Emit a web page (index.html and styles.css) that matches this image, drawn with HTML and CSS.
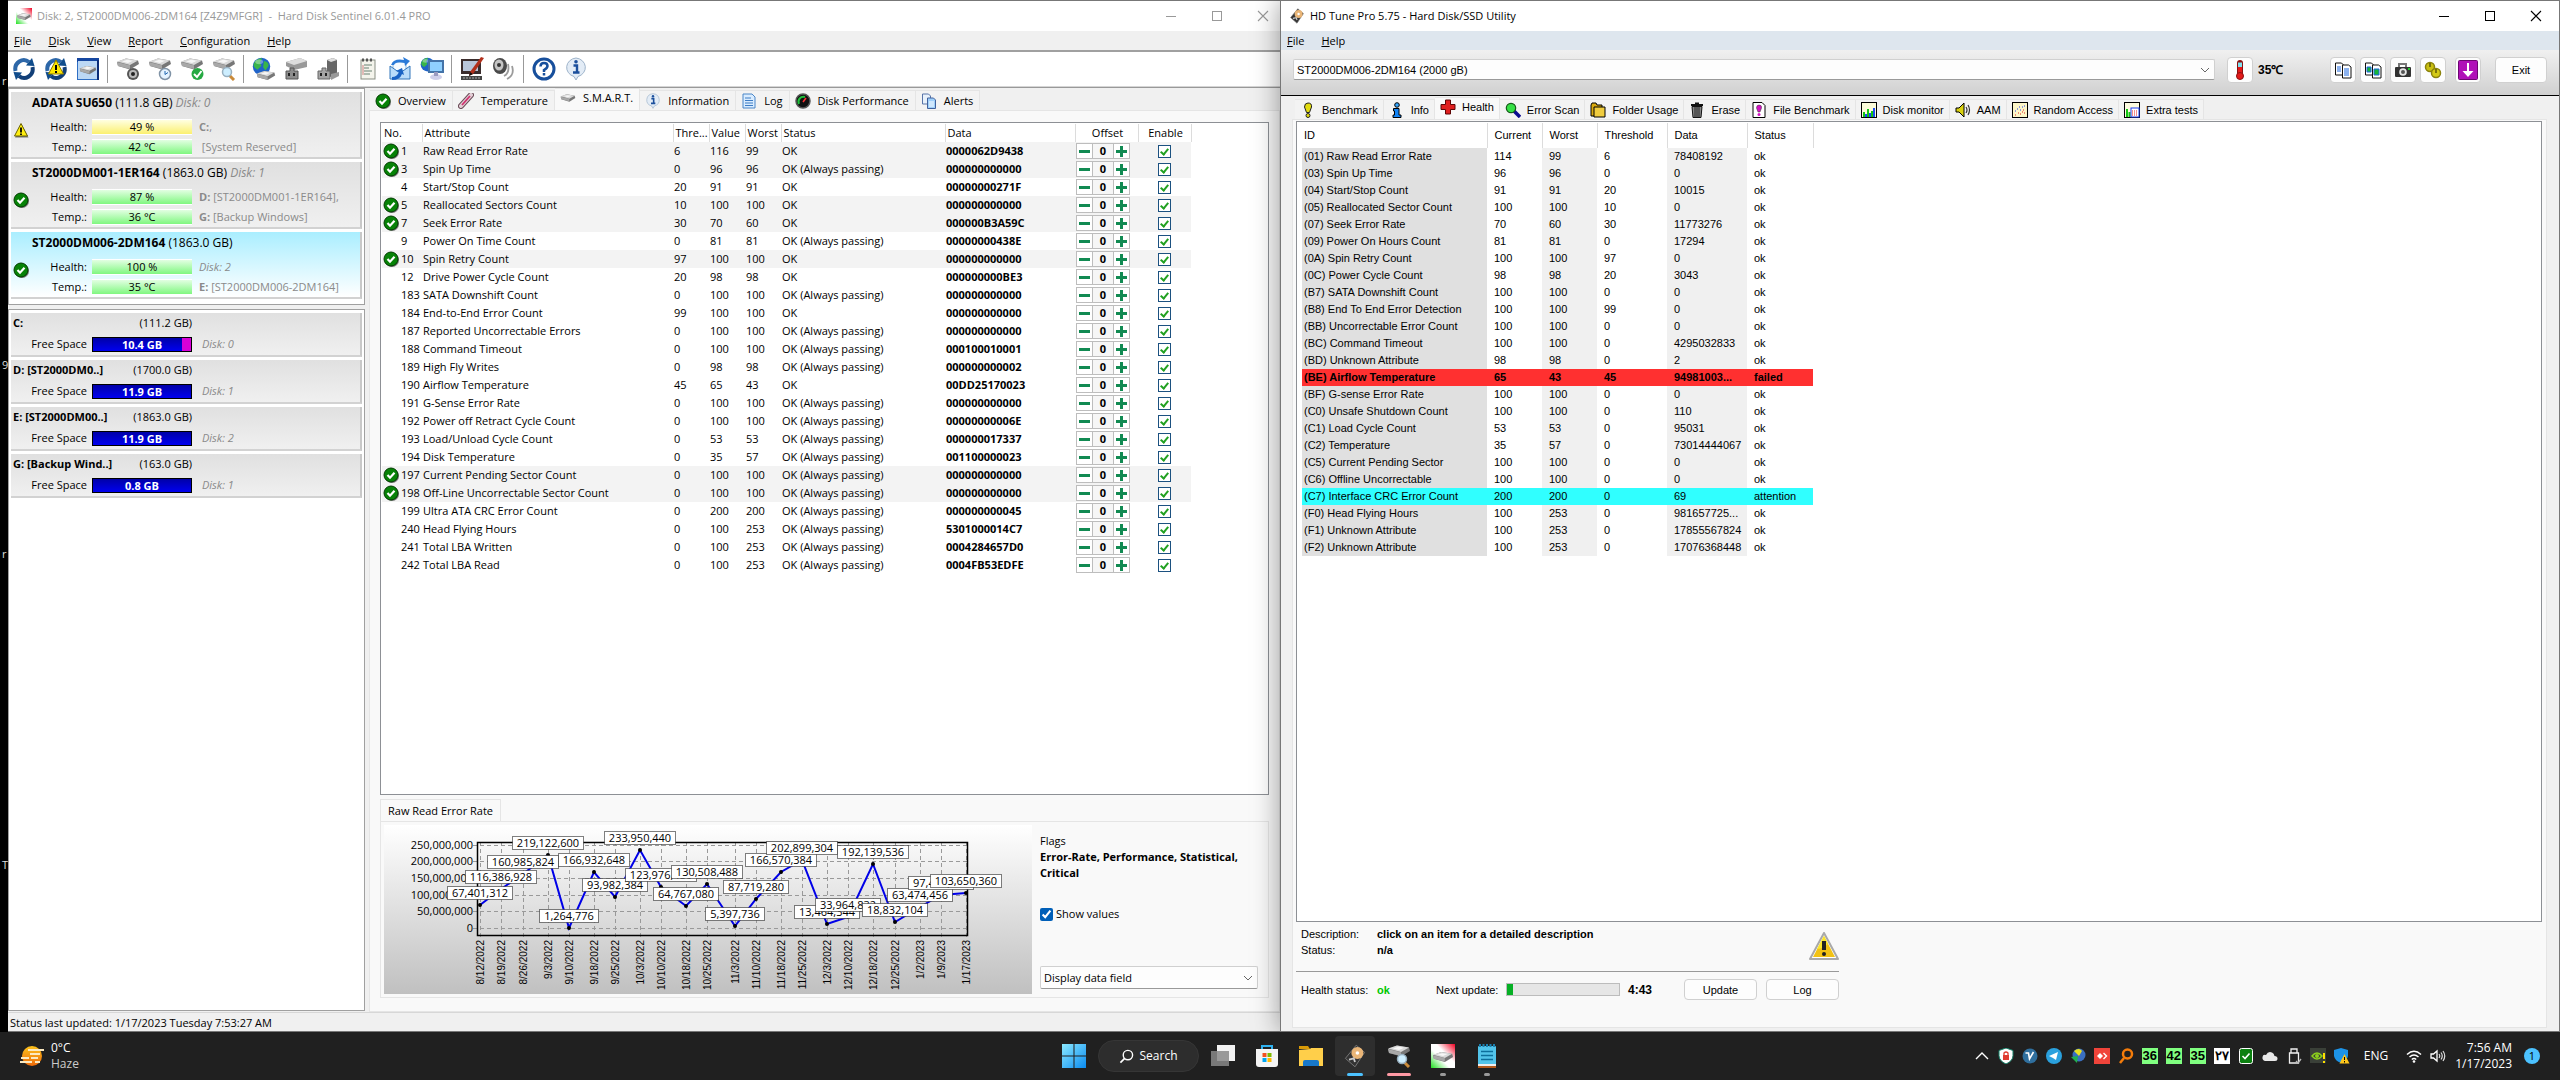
FILE: index.html
```html
<!DOCTYPE html>
<html lang="en">

<head>
    <meta charset="UTF-8">
    <meta name="viewport" content="width=device-width, initial-scale=1.0">
    <title>Desktop - Hard Disk Sentinel / HD Tune Pro</title>
    <link rel="stylesheet" href="styles.css">
</head>

<body>
    <!-- shared icon shapes -->
    <svg class="sprite" width="0" height="0" aria-hidden="true">
        <defs>
            <linearGradient id="gWin" x1="0" y1="0" x2="1" y2="1">
                <stop offset="0" stop-color="#8be9ff" />
                <stop offset="1" stop-color="#0a8bf0" />
            </linearGradient>
            <linearGradient id="gChart" x1="0" y1="0" x2="0" y2="1">
                <stop offset="0" stop-color="#fff" />
                <stop offset="1" stop-color="#c0c0c0" />
            </linearGradient>
            <linearGradient id="gRedGreen" x1="0" y1="1" x2="1" y2="0">
                <stop offset="0" stop-color="#1fe01f" />
                <stop offset="0.4" stop-color="#fff" />
                <stop offset="0.6" stop-color="#fff" />
                <stop offset="1" stop-color="#f00020" />
            </linearGradient>
            <linearGradient id="gSun" x1="0" y1="0" x2="0" y2="1">
                <stop offset="0" stop-color="#fcc21b" />
                <stop offset="1" stop-color="#ee6a0a" />
            </linearGradient>
        </defs>

        <symbol id="ok" viewBox="0 0 16 16">
            <circle cx="9" cy="9" r="7" fill="#777" />
            <circle cx="8" cy="8" r="7" fill="#078207" stroke="#013c01" />
            <path d="M4.500 8l2.500 2.700 4.500-5" fill="none" stroke="#fff" stroke-width="2.200" />
        </symbol>
        <symbol id="warn" viewBox="0 0 16 16">
            <path d="M9 3l6.500 12.500H2z" fill="#777" />
            <path d="M8 1.500l6.500 12.500H1.500z" fill="#ffee10" stroke="#6b6300" />
            <path d="M8 5.500v5M8 11.500v1.500" stroke="#000" stroke-width="1.800" />
        </symbol>
        <symbol id="drive" viewBox="0 0 24 12">
            <path d="M1 4L10 .5l12 2L23 6l-9 5.500L2 8z" fill="#777" />
            <path d="M1 3.500L10 .5l12 2-8 4.500z" fill="#d8d8d8" />
            <path d="M6 3.500l5-1.700 6 1-5 2.200z" fill="#f6f6f6" />
            <path d="M1 4l13 3.200V11L2 8z" fill="#a8a8a8" />
        </symbol>
        <symbol id="refresh" viewBox="0 0 24 24">
            <path d="M3.500 14A8.500 9 0 0 1 17 5" fill="none" stroke="#2d67a8" stroke-width="4" />
            <path d="M20.500 10A8.500 9 0 0 1 7 19" fill="none" stroke="#123f78" stroke-width="4" />
            <path d="M14 8.500l8.500.500L20 1z" fill="#0f4c8c" />
            <path d="M10 15.500L1.500 15 4 23z" fill="#0f4c8c" />
        </symbol>
        <symbol id="refresh-warn" viewBox="0 0 24 24">
            <use href="#refresh" />
            <path d="M12 3l7.500 14h-15z" fill="#ffe800" stroke="#8c7c00" />
            <path d="M12 8v5M12 14v2" stroke="#000" stroke-width="2" />
        </symbol>
        <symbol id="disk-view" viewBox="0 0 24 24">
            <rect x="1" y="1" width="22" height="22" fill="#2f6fc4" />
            <rect x="1" y="1" width="22" height="4" fill="#1647a0" />
            <rect x="2" y="4" width="19" height="18" fill="#bcd8f5" />
            <rect x="21" y="3" width="2" height="20" fill="#0b2c78" />
            <use href="#drive" x="3" y="8" width="18" height="10" />
        </symbol>
        <symbol id="d-gear" viewBox="0 0 24 24">
            <use href="#drive" x="0" y="1" width="24" height="12" />
            <circle cx="17" cy="17" r="6" fill="#555" />
            <circle cx="17" cy="17" r="4" fill="#bbb" />
            <circle cx="17" cy="17" r="2" fill="#222" />
        </symbol>
        <symbol id="d-clock" viewBox="0 0 24 24">
            <use href="#drive" x="0" y="1" width="24" height="12" />
            <circle cx="17" cy="17" r="5.500" fill="#e4f3ff" stroke="#8093a6" stroke-width="1.500" />
            <path d="M17 14v3.500l3-2" fill="none" stroke="#1f66b0" />
        </symbol>
        <symbol id="d-check" viewBox="0 0 24 24">
            <use href="#drive" x="0" y="1" width="24" height="12" />
            <circle cx="17.500" cy="17" r="6" fill="#25a942" />
            <path d="M14 17l3 3 4.500-6" fill="none" stroke="#fff" stroke-width="2" />
        </symbol>
        <symbol id="d-search" viewBox="0 0 24 24">
            <use href="#drive" x="0" y="1" width="24" height="12" />
            <path d="M17 18l5 5" stroke="#c98a3a" stroke-width="3" />
            <circle cx="15" cy="15" r="4.500" fill="#cdeeff" stroke="#98b0c0" stroke-width="1.500" />
        </symbol>
        <symbol id="globe" viewBox="0 0 24 24">
            <circle cx="12" cy="12" r="11" fill="#1f63c9" />
            <path d="M4 5q6-5 9-3l-3 5 2 4-5 5q-6-3-5-7zM15 5q6 1 6 6l-4 6-3-4z" fill="#39b54a" />
            <ellipse cx="9" cy="6" rx="5" ry="3" fill="#fff" opacity="0.350" />
        </symbol>
        <symbol id="globe-disk" viewBox="0 0 24 24">
            <use href="#globe" x="0" y="0" width="19" height="19" />
            <use href="#drive" x="4" y="13" width="20" height="11" />
        </symbol>
        <symbol id="plug-a" viewBox="0 0 24 24">
            <path d="M2 5l14-4 7 3v6l-13 3-8-4z" fill="#999" />
            <path d="M2 5l14-4 7 3-13 4z" fill="#ddd" />
            <path d="M2 14h4v-3h4v3h4v8H2z" fill="#8c8c8c" stroke="#555" />
            <path d="M5 16v3M10 16v3" stroke="#222" stroke-width="2" />
        </symbol>
        <symbol id="plug-b" viewBox="0 0 24 24">
            <path d="M11 3l6-2 4 2v14l-7 3-3-2z" fill="#666" />
            <path d="M11 3l6-2 4 2-6 2z" fill="#ddd" />
            <path d="M15 17l8-2v4l-8 4z" fill="#999" />
            <path d="M2 14h4v-3h4v3h4v8H2z" fill="#a5a5a5" stroke="#666" />
            <path d="M5 16v3M10 16v3" stroke="#222" stroke-width="2" />
        </symbol>
        <symbol id="notes" viewBox="0 0 24 24">
            <rect x="5" y="3" width="14" height="19" fill="#f4f4ec" stroke="#8a8f84" />
            <path d="M6 3h12" stroke="#555" stroke-width="3" stroke-dasharray="2 2" />
            <path d="M8 8h8M8 11h5M8 14h8M8 17h6" stroke="#97a79b" stroke-width="1.300" />
            <path d="M7 8v10" stroke="#d08080" />
        </symbol>
        <symbol id="mail" viewBox="0 0 24 24">
            <path d="M5 5h13v9H5z" fill="#f4faff" stroke="#8ab5dc" />
            <path d="M2 9l10 7 10-7v13H2z" fill="#b9dcfa" stroke="#3377bb" />
            <path d="M3 8q3-7 13-5l-1-3 7 4-5 5-.500-3Q8 4 6 8z" fill="#2a7ad8" />
            <path d="M4 20q5 0 7-5l-3-1 6-3 2 7-2-1q-2 6-10 6z" fill="#1a63c4" />
        </symbol>
        <symbol id="network" viewBox="0 0 24 24">
            <use href="#globe" x="0" y="0" width="15" height="15" />
            <rect x="9" y="4" width="14" height="11" fill="#8fd0ff" stroke="#4473a8" stroke-width="2" />
            <ellipse cx="16" cy="20" rx="6" ry="3" fill="#cfcfea" />
            <path d="M16 15v4" stroke="#9a9ac0" stroke-width="4" />
        </symbol>
        <symbol id="monitor-pen" viewBox="0 0 24 24">
            <rect x="1" y="2" width="20" height="15" fill="#3a2c2c" />
            <rect x="3" y="4" width="15" height="10" fill="#b9c6da" />
            <path d="M1 19h21v4H1z" fill="#444" />
            <path d="M3 21h17" stroke="#aaa" stroke-dasharray="2 1" />
            <path d="M24 1L21 0 10 15l-1 4 4-2z" fill="#b2301c" />
            <path d="M10 15l-1 4 4-2z" fill="#111" />
        </symbol>
        <symbol id="speaker" viewBox="0 0 24 24">
            <ellipse cx="8" cy="9" rx="7" ry="8" fill="#4a4a4a" />
            <ellipse cx="7" cy="8" rx="4.500" ry="5.500" fill="#c4c4c4" />
            <circle cx="7" cy="8" r="2" fill="#333" />
            <path d="M12 19q6-3 4-12M15 22q8-4 5-13" fill="none" stroke="#9b9b9b" stroke-width="1.800" />
        </symbol>
        <symbol id="help" viewBox="0 0 24 24">
            <circle cx="12" cy="12" r="10" fill="#fff" stroke="#174f9c" stroke-width="3" />
            <path d="M8.500 9.500q0-3.500 3.500-3.500t3.500 3q0 2-3.500 4v2M12 16v2.500" fill="none" stroke="#174f9c" stroke-width="2.500" />
        </symbol>
        <symbol id="info" viewBox="0 0 24 24">
            <path d="M12 1a10.500 9.500 0 0 1 2 18.500L12 23l-2-3.500A10.500 9.500 0 0 1 12 1z" fill="#e3ecf6" stroke="#9db3ca" />
            <path d="M9.500 8.500H13V15M9 15.500h6.500" fill="none" stroke="#1c4f9c" stroke-width="2.400" />
            <circle cx="12" cy="4.800" r="1.800" fill="#1c4f9c" />
        </symbol>
        <symbol id="thermo-pink" viewBox="0 0 16 16">
            <path d="M3 13L13 2" stroke="#6b4c58" stroke-width="6" stroke-linecap="round" />
            <path d="M3 13L13 2" stroke="#e2cfd6" stroke-width="4" stroke-linecap="round" />
            <path d="M4 12L12 3" stroke="#d0306e" stroke-width="1.800" />
        </symbol>
        <symbol id="page" viewBox="0 0 16 16">
            <path d="M2 1h9l3 3v11H2z" fill="#d9ecff" stroke="#4a86c8" />
            <path d="M4 5h6M4 7.500h8M4 10h8M4 12.500h8" stroke="#3d7cc4" />
        </symbol>
        <symbol id="gauge" viewBox="0 0 16 16">
            <circle cx="8" cy="8" r="7" fill="#111" stroke="#555" stroke-width="1.500" />
            <path d="M4 11a5 5 0 0 1 6-7" fill="none" stroke="#1fbf3a" stroke-width="2" />
            <path d="M8 9l3-4" stroke="#f33" stroke-width="1.500" />
        </symbol>
        <symbol id="pages" viewBox="0 0 16 16">
            <path d="M1.500 1h6l2 2v8h-8z" fill="#e8f1fb" stroke="#5874a8" />
            <path d="M6.500 5h6l2 2v8.500h-8z" fill="#9fd0fb" stroke="#41619c" />
            <path d="M8 9h5M8 11h5M8 13h5" stroke="#fff" />
        </symbol>
        <symbol id="app-hds" viewBox="0 0 24 24">
            <rect width="24" height="24" fill="url(#gRedGreen)" />
            <use href="#drive" x="1" y="6" width="22" height="14" />
        </symbol>

        <symbol id="app-tune" viewBox="0 0 20 20">
            <path d="M2 12L11 1l7 6-8 12z" fill="#333" stroke="#777" stroke-width="0.800" />
            <circle cx="12" cy="7.500" r="5" fill="#e9b577" />
            <circle cx="12" cy="7.500" r="1.500" fill="#fff" />
            <path d="M5 13l4-1 1 3" fill="none" stroke="#ccc" stroke-width="1.500" />
        </symbol>
        <symbol id="bang" viewBox="0 0 16 16">
            <path d="M8 1q4 0 3.500 4L9.500 10.500h-3L4.500 5Q4.500 1 8 1z" fill="#e2dc10" stroke="#222" />
            <circle cx="8" cy="13.500" r="2" fill="#e2dc10" stroke="#222" />
        </symbol>
        <symbol id="i-blue" viewBox="0 0 16 16">
            <circle cx="8" cy="3" r="2.300" fill="#35a8ff" stroke="#000" />
            <path d="M4.500 6.500h5.500v6.500h2v2.500h-8V13h1.500V9h-1z" fill="#1183f5" stroke="#000" />
        </symbol>
        <symbol id="cross" viewBox="0 0 16 16">
            <path d="M5.500 1h5v4.500H15v5h-4.500V15h-5v-4.500H1v-5h4.500z" fill="#e01f1f" stroke="#5e0505" />
        </symbol>
        <symbol id="lens" viewBox="0 0 16 16">
            <path d="M9 9l6 6" stroke="#0b0b90" stroke-width="3.500" />
            <circle cx="6" cy="6" r="4.700" fill="#35e045" stroke="#165c1a" stroke-width="1.200" />
        </symbol>
        <symbol id="folder" viewBox="0 0 16 16">
            <path d="M1 3l1-2h4l1 2h5v11H1z" fill="#d9a90d" stroke="#000" />
            <path d="M4 5h11v10H4z" fill="#f0cc3e" stroke="#000" />
        </symbol>
        <symbol id="bin" viewBox="0 0 16 16">
            <path d="M2 3h12M6 1.500h4" stroke="#111" stroke-width="2" />
            <path d="M3 4.500h10l-1 11H4z" fill="#888" stroke="#111" />
            <path d="M6 5v10M8 5v10M10 5v10" stroke="#222" />
        </symbol>
        <symbol id="file-bang" viewBox="0 0 16 16">
            <path d="M2 .500h9l3 3v12H2z" fill="#fff" stroke="#000" />
            <path d="M8 3q3 0 2.500 3L9 10H7L5.500 6Q5.500 3 8 3z" fill="#d412c4" stroke="#333" stroke-width="0.500" />
            <circle cx="8" cy="12.500" r="1.500" fill="#d412c4" />
        </symbol>
        <symbol id="bars" viewBox="0 0 16 16">
            <rect x="0.500" y="0.500" width="15" height="15" fill="#fcfcda" stroke="#000" />
            <path d="M3 15v-5M7 15V7M11 15V9" stroke="#13c513" stroke-width="2" />
            <path d="M5 15v-3M9 15v-4M13 15V6" stroke="#1b4bf0" stroke-width="2" />
        </symbol>
        <symbol id="sound" viewBox="0 0 16 16">
            <path d="M1 6h3l5-5v14l-5-5H1z" fill="#d9d10f" stroke="#000" />
            <path d="M11 5q2 3 0 6M13 3q3 5 0 10" fill="none" stroke="#333" stroke-width="1.200" />
        </symbol>
        <symbol id="scatter" viewBox="0 0 16 16">
            <rect x="0.500" y="0.500" width="15" height="15" fill="#fdf6c8" stroke="#000" />
            <path d="M3 9h1M5 7h1M8 8h1M10 5h1M12 4h1M7 5h1" stroke="#1a3cf0" />
            <path d="M3 13h1M6 11h1M8 12h1M10 10h1M12 11h1M11 8h1" stroke="#e01f1f" />
        </symbol>
        <symbol id="extra" viewBox="0 0 16 16">
            <rect x="0.500" y="0.500" width="15" height="15" fill="#fdfbe0" stroke="#000" />
            <path d="M3 15V7M5.500 15V10" stroke="#13c513" stroke-width="2" />
            <rect x="7" y="6" width="8" height="9" fill="#fff" stroke="#1a3cf0" />
            <path d="M8 9h6M8 11h6M8 13h6" stroke="#e01f1f" stroke-dasharray="1 1" />
        </symbol>
        <symbol id="thermo" viewBox="0 0 20 20">
            <path d="M10 3v10" stroke="#8a1010" stroke-width="6" stroke-linecap="round" />
            <path d="M10 2.500V8" stroke="#7fe3f0" stroke-width="4" />
            <path d="M10 7v8" stroke="#e31919" stroke-width="4" />
            <circle cx="10" cy="16" r="3.500" fill="#e31919" stroke="#8a1010" />
        </symbol>
        <symbol id="copy-text" viewBox="0 0 20 20">
            <path d="M2.500 3h6l2 2v10h-8z" fill="#fff" stroke="#111" />
            <path d="M9.500 5h6l2.500 2v11H9.500z" fill="#fff" stroke="#111" />
            <path d="M4 7h4M4 9h4M4 11h4M11 9h5M11 11h5M11 13h5M11 15h5" stroke="#1a66e0" />
        </symbol>
        <symbol id="copy-pic" viewBox="0 0 20 20">
            <path d="M2.500 3h6l2 2v10h-8z" fill="#fff" stroke="#111" />
            <path d="M9.500 5h6l2.500 2v11H9.500z" fill="#fff" stroke="#111" />
            <path d="M4 7h4v5H4zM11 9h5v6h-5z" fill="#17b538" stroke="#1a66e0" />
        </symbol>
        <symbol id="camera" viewBox="0 0 20 20">
            <path d="M6 7V4h7v3" fill="none" stroke="#777" stroke-width="2" />
            <rect x="2" y="7" width="16" height="10" rx="1" fill="#333" />
            <circle cx="10" cy="12" r="3.800" fill="#e5e5e5" />
            <circle cx="10" cy="12" r="2" fill="#555" />
            <path d="M15 9h2" stroke="#1dcc2a" stroke-width="2" />
        </symbol>
        <symbol id="wheels" viewBox="0 0 20 20">
            <circle cx="7" cy="7" r="4.500" fill="#c9bf12" stroke="#8b830c" stroke-width="1.500" />
            <circle cx="13" cy="13" r="4.500" fill="#d4ca16" stroke="#8b830c" stroke-width="1.500" />
            <path d="M7 3v4M13 9v4" stroke="#5d5806" stroke-width="1.500" />
        </symbol>
        <symbol id="save-down" viewBox="0 0 20 20">
            <rect x="0.500" y="0.500" width="19" height="19" rx="1" fill="#b010b8" stroke="#6c0671" />
            <path d="M10 3v9" stroke="#fff" stroke-width="2" />
            <path d="M4.500 11h11L10 17z" fill="#fff" />
        </symbol>
        <symbol id="big-warn" viewBox="0 0 30 28">
            <path d="M15 1l14 26H1z" fill="#fff" stroke="#a9a9a9" stroke-width="2" stroke-linejoin="round" />
            <path d="M15 4l11 21H4z" fill="#f2c214" />
            <path d="M15 4l4 8q-6 5-11 5z" fill="#fbe62a" />
            <path d="M15 9v9" stroke="#222" stroke-width="4" />
            <circle cx="15" cy="22" r="2" fill="#222" />
        </symbol>

        <symbol id="haze" viewBox="0 0 24 20">
            <circle cx="12" cy="10" r="10" fill="url(#gSun)" />
            <path d="M8 4h16M10 8h10M1 12h8M11 12h7M0 16h12M15 16h5" stroke="#fbe9c0" stroke-width="2" />
        </symbol>
        <symbol id="win" viewBox="0 0 23 23">
            <path d="M0 0h11v11H0zM12 0h11v11H12zM0 12h11v11H0zM12 12h11v11H12z" fill="url(#gWin)" />
        </symbol>
        <symbol id="search" viewBox="0 0 16 16">
            <circle cx="9.500" cy="6.500" r="5" fill="none" stroke="#fff" stroke-width="1.500" />
            <path d="M6 10L1.500 14.500" stroke="#fff" stroke-width="1.800" />
        </symbol>
        <symbol id="taskview" viewBox="0 0 24 24">
            <rect x="6" y="1" width="18" height="16" fill="#f2f2f2" />
            <rect x="0" y="7" width="18" height="15" fill="#8a8a8a" opacity="0.850" />
        </symbol>
        <symbol id="store" viewBox="0 0 24 24">
            <path d="M7 6V2h10v4" fill="none" stroke="#2fb2f0" stroke-width="2" />
            <path d="M1 5h22v15q0 3-3 3H4q-3 0-3-3z" fill="#f4f4f4" />
            <rect x="7.500" y="9" width="4" height="4" fill="#f25022" />
            <rect x="12.500" y="9" width="4" height="4" fill="#7fba00" />
            <rect x="7.500" y="14" width="4" height="4" fill="#00a4ef" />
            <rect x="12.500" y="14" width="4" height="4" fill="#ffb900" />
        </symbol>
        <symbol id="explorer" viewBox="0 0 24 24">
            <path d="M0 2h9l2 3h-11z" fill="#d99a06" />
            <path d="M0 6l11-1 1-1h12v18H0z" fill="#ffcf4a" />
            <path d="M4 22v-4q0-2 2-2h12q2 0 2 2v4z" fill="#1878c9" />
        </symbol>
        <symbol id="notepad" viewBox="0 0 18 24">
            <rect x="0" y="2" width="18" height="19" rx="1" fill="#52c4ea" />
            <path d="M1 1.500h16" stroke="#1a7fae" stroke-width="3" stroke-dasharray="2 1.500" />
            <path d="M3 7.500h12M3 11.500h12M3 15.500h12" stroke="#0c6f9c" stroke-width="1.600" />
            <rect x="0" y="20" width="18" height="2" fill="#eee" />
            <rect x="0" y="22" width="18" height="2" fill="#b35a1c" />
        </symbol>
        <symbol id="up" viewBox="0 0 16 16">
            <path d="M2 11l6-6 6 6" fill="none" stroke="#fff" stroke-width="1.400" />
        </symbol>
        <symbol id="shield-lock" viewBox="0 0 16 16">
            <path d="M8 0l7 2.500v5q0 5.500-7 8.500-7-3-7-8.500v-5z" fill="#fff" stroke="#158068" />
            <rect x="5" y="7" width="6" height="5" fill="#e03c31" />
            <path d="M6 7V5q2-2 4 0v2" fill="none" stroke="#e03c31" stroke-width="1.300" />
        </symbol>
        <symbol id="v-blue" viewBox="0 0 16 16">
            <circle cx="8" cy="8" r="7.500" fill="#2f6f9e" />
            <path d="M3.500 5h3l1 6 4-7" fill="none" stroke="#fff" stroke-width="1.600" />
        </symbol>
        <symbol id="telegram" viewBox="0 0 16 16">
            <circle cx="8" cy="8" r="8" fill="#2aa1de" />
            <path d="M3 8l9-4-2 8-3-2z" fill="#fff" />
        </symbol>
        <symbol id="idm" viewBox="0 0 16 16">
            <circle cx="9" cy="7" r="6.500" fill="#3a6fc0" />
            <path d="M4 3q5-4 8 0l-3 5z" fill="#e8e020" />
            <path d="M1 9l6 6 1-7z" fill="#22b14c" />
        </symbol>
        <symbol id="anydesk" viewBox="0 0 16 16">
            <rect width="16" height="16" fill="#f0443a" />
            <path d="M6 5l3 3-3 3-3-3z" fill="#fff" />
            <path d="M9.500 5l3 3-3 3" fill="none" stroke="#fff" stroke-width="1.400" />
        </symbol>
        <symbol id="lens-o" viewBox="0 0 16 16">
            <circle cx="9.500" cy="6" r="4.500" fill="none" stroke="#f57c0a" stroke-width="2.500" />
            <path d="M6 10l-4 5" stroke="#f57c0a" stroke-width="2.500" />
        </symbol>
        <symbol id="tray-ok" viewBox="0 0 16 16">
            <rect x="1.500" y="0.500" width="13" height="15" rx="2" fill="#0b8010" stroke="#fff" />
            <path d="M4.500 8l2.500 2.500 4.500-5" fill="none" stroke="#fff" stroke-width="1.600" />
        </symbol>
        <symbol id="cloud" viewBox="0 0 16 16">
            <path d="M3 13q-3-1-2.500-4T4 7q2-4 6-2.500Q12 5 12.500 8q3 0 3 2.500T13 13z" fill="#e8e8e8" />
        </symbol>
        <symbol id="usb" viewBox="0 0 16 16">
            <path d="M5 5V1h6v4M3.500 5h9v10h-9z" fill="none" stroke="#eee" stroke-width="1.300" />
            <path d="M10 13l2 2 3-4" fill="none" stroke="#bbb" stroke-width="1.300" />
        </symbol>
        <symbol id="nvidia" viewBox="0 0 16 16">
            <rect width="16" height="15" fill="#3a4038" />
            <path d="M2 8q5-6 10 0-5 6-10 0z" fill="none" stroke="#8ccf1c" stroke-width="1.500" />
            <circle cx="7" cy="8" r="2" fill="#8ccf1c" />
            <path d="M14 5v6M14 13v2" stroke="#ffe000" stroke-width="2" />
        </symbol>
        <symbol id="defender" viewBox="0 0 16 16">
            <path d="M7 0l7 2v6q-1 5-7 7-6-2-7-7V2z" fill="#1d93e6" />
            <path d="M10.500 6l5 9.500h-10z" fill="#ffc61a" />
            <path d="M10.500 9v3M10.500 13v1.500" stroke="#000" />
        </symbol>
        <symbol id="wifi" viewBox="0 0 16 16">
            <path d="M1 6.500q7-6.500 14 0M3.500 9q4.500-4 9 0M5.800 11.500q2.200-2 4.400 0" fill="none" stroke="#fff" stroke-width="1.500" />
            <circle cx="8" cy="13.500" r="1.300" fill="#fff" />
        </symbol>
        <symbol id="volume" viewBox="0 0 16 16">
            <path d="M1 6h2.500L7 3v10L3.500 10H1z" fill="none" stroke="#fff" stroke-width="1.300" />
            <path d="M9 6q1.500 2 0 4M11 4.500q2.500 3.500 0 7M13 3q3.500 5 0 10" fill="none" stroke="#ddd" stroke-width="1.200" />
        </symbol>
        <symbol id="w-min" viewBox="0 0 12 12">
            <path d="M1 6.500h10" stroke="currentColor" />
        </symbol>
        <symbol id="w-max" viewBox="0 0 12 12">
            <rect x="1.500" y="1.500" width="9" height="9" fill="none" stroke="currentColor" />
        </symbol>
        <symbol id="w-close" viewBox="0 0 12 12">
            <path d="M1 1l10 10M11 1L1 11" stroke="currentColor" stroke-width="1.100" />
        </symbol>
    </svg>

    <main class="desktop">
        <div class="wallpaper">
            <span class="d1">r</span>
            <span class="d2">9</span>
            <span class="d3">r</span>
            <span class="d4">T</span>
        </div>

        <!-- Hard Disk Sentinel -->
        <section class="window hds">
            <header class="titlebar inactive">
                <svg class="app-icon"><use href="#app-hds" /></svg>
                <span class="caption">Disk: 2, ST2000DM006-2DM164 [Z4Z9MFGR] &nbsp;-&nbsp; Hard Disk Sentinel 6.01.4 PRO</span>
                <button class="win-btn" aria-label="Minimize"><svg><use href="#w-min" /></svg></button>
                <button class="win-btn" aria-label="Maximize"><svg><use href="#w-max" /></svg></button>
                <button class="win-btn" aria-label="Close"><svg><use href="#w-close" /></svg></button>
            </header>
            <nav class="menubar">
                <button><u>F</u>ile</button>
                <button><u>D</u>isk</button>
                <button><u>V</u>iew</button>
                <button><u>R</u>eport</button>
                <button><u>C</u>onfiguration</button>
                <button><u>H</u>elp</button>
            </nav>
            <div class="toolbar">
                <button aria-label="Refresh"><svg><use href="#refresh" /></svg></button>
                <button aria-label="Refresh warnings"><svg><use href="#refresh-warn" /></svg></button>
                <button aria-label="Disk view"><svg><use href="#disk-view" /></svg></button>
                <i></i>
                <button aria-label="Acoustic"><svg><use href="#d-gear" /></svg></button>
                <button aria-label="Short test"><svg><use href="#d-clock" /></svg></button>
                <button aria-label="Extended test"><svg><use href="#d-check" /></svg></button>
                <button aria-label="Surface test"><svg><use href="#d-search" /></svg></button>
                <i></i>
                <button aria-label="Online info"><svg><use href="#globe-disk" /></svg></button>
                <button aria-label="Connect"><svg><use href="#plug-a" /></svg></button>
                <button aria-label="Disconnect"><svg><use href="#plug-b" /></svg></button>
                <i></i>
                <button aria-label="Report"><svg><use href="#notes" /></svg></button>
                <button aria-label="Send report"><svg><use href="#mail" /></svg></button>
                <button aria-label="Network"><svg><use href="#network" /></svg></button>
                <i></i>
                <button aria-label="Configuration"><svg><use href="#monitor-pen" /></svg></button>
                <button aria-label="Sound"><svg><use href="#speaker" /></svg></button>
                <i></i>
                <button aria-label="Help"><svg><use href="#help" /></svg></button>
                <button aria-label="About"><svg><use href="#info" /></svg></button>
            </div>

            <div class="hds-body">
                <aside class="side">
                    <div class="panel">
                        <div class="disk">
                            <h3>ADATA SU650 <span>(111.8 GB)</span> <em>Disk: 0</em></h3>
                            <svg class="state"><use href="#warn" /></svg>
                            <span class="lbl">Health:</span><span class="bar yellow">49 %</span><span class="vol"><b>C:</b>,</span>
                            <span class="lbl">Temp.:</span><span class="bar">42 °C</span><span class="vol">&nbsp;[System Reserved]</span>
                        </div>
                        <div class="disk">
                            <h3>ST2000DM001-1ER164 <span>(1863.0 GB)</span> <em>Disk: 1</em></h3>
                            <svg class="state"><use href="#ok" /></svg>
                            <span class="lbl">Health:</span><span class="bar">87 %</span><span class="vol"><b>D:</b> [ST2000DM001-1ER164],</span>
                            <span class="lbl">Temp.:</span><span class="bar">36 °C</span><span class="vol"><b>G:</b> [Backup Windows]</span>
                        </div>
                        <div class="disk selected">
                            <h3>ST2000DM006-2DM164 <span>(1863.0 GB)</span></h3>
                            <svg class="state"><use href="#ok" /></svg>
                            <span class="lbl">Health:</span><span class="bar">100 %</span><span class="vol"><em>Disk: 2</em></span>
                            <span class="lbl">Temp.:</span><span class="bar">35 °C</span><span class="vol"><b>E:</b> [ST2000DM006-2DM164]</span>
                        </div>
                    </div>
                    <div class="panel volumes">
                        <div class="volume">
                            <div class="name"><b>C:</b><span>(111.2 GB)</span></div>
                            <span class="lbl">Free Space</span><span class="space low">10.4 GB</span><em>Disk: 0</em>
                        </div>
                        <div class="volume">
                            <div class="name"><b>D: [ST2000DM0..]</b><span>(1700.0 GB)</span></div>
                            <span class="lbl">Free Space</span><span class="space">11.9 GB</span><em>Disk: 1</em>
                        </div>
                        <div class="volume">
                            <div class="name"><b>E: [ST2000DM00..]</b><span>(1863.0 GB)</span></div>
                            <span class="lbl">Free Space</span><span class="space">11.9 GB</span><em>Disk: 2</em>
                        </div>
                        <div class="volume">
                            <div class="name"><b>G: [Backup Wind..]</b><span>(163.0 GB)</span></div>
                            <span class="lbl">Free Space</span><span class="space">0.8 GB</span><em>Disk: 1</em>
                        </div>
                    </div>
                </aside>

                <div class="main">
                    <div class="tabs">
                        <button><svg><use href="#ok" /></svg>Overview</button>
                        <button><svg><use href="#thermo-pink" /></svg>Temperature</button>
                        <button class="active"><svg><use href="#drive" /></svg>S.M.A.R.T.</button>
                        <button><svg><use href="#info" /></svg>Information</button>
                        <button><svg><use href="#page" /></svg>Log</button>
                        <button><svg><use href="#gauge" /></svg>Disk Performance</button>
                        <button><svg><use href="#pages" /></svg>Alerts</button>
                    </div>
                    <div class="page">
                        <div class="list">
                            <table class="smart">
                                <colgroup>
                                    <col class="c-no"><col class="c-attr"><col class="c-num"><col class="c-num"><col class="c-num"><col class="c-status"><col class="c-data"><col class="c-offset"><col class="c-enable">
                                </colgroup>
                                <thead>
                                    <tr><th>No.</th><th>Attribute</th><th>Thre...</th><th>Value</th><th>Worst</th><th>Status</th><th>Data</th><th class="mid">Offset</th><th class="mid">Enable</th></tr>
                                </thead>
                                <tbody id="smartRows"></tbody>
                            </table>
                        </div>

                        <div class="sub-tabs"><button>Raw Read Error Rate</button></div>
                        <div class="detail">
                            <svg class="chart" id="chart" viewBox="0 0 648 169" role="img" aria-label="Raw Read Error Rate history"></svg>
                            <div class="flags">
                                <div>Flags</div>
                                <p>Error-Rate, Performance, Statistical, Critical</p>
                                <label class="show"><input type="checkbox" checked> Show values</label>
                                <select aria-label="Display field">
                                    <option>Display data field</option>
                                </select>
                            </div>
                        </div>
                    </div>
                </div>
            </div>
            <footer class="statusbar">Status last updated: 1/17/2023 Tuesday 7:53:27 AM</footer>
        </section>

        <!-- HD Tune Pro -->
        <section class="window tune">
            <header class="titlebar">
                <svg class="app-icon"><use href="#app-tune" /></svg>
                <span class="caption">HD Tune Pro 5.75 - Hard Disk/SSD Utility</span>
                <button class="win-btn" aria-label="Minimize"><svg><use href="#w-min" /></svg></button>
                <button class="win-btn" aria-label="Maximize"><svg><use href="#w-max" /></svg></button>
                <button class="win-btn" aria-label="Close"><svg><use href="#w-close" /></svg></button>
            </header>
            <nav class="menubar">
                <button><u>F</u>ile</button>
                <button><u>H</u>elp</button>
            </nav>
            <div class="tune-bar">
                <select aria-label="Drive">
                    <option>ST2000DM006-2DM164 (2000 gB)</option>
                </select>
                <button class="sq" aria-label="Temperature"><svg><use href="#thermo" /></svg></button>
                <strong>35℃</strong>
                <div class="group">
                    <button class="sq" aria-label="Copy text"><svg><use href="#copy-text" /></svg></button>
                    <button class="sq" aria-label="Copy picture"><svg><use href="#copy-pic" /></svg></button>
                    <button class="sq" aria-label="Screenshot"><svg><use href="#camera" /></svg></button>
                    <button class="sq" aria-label="Options"><svg><use href="#wheels" /></svg></button>
                </div>
                <button class="sq" aria-label="Save"><svg><use href="#save-down" /></svg></button>
                <button class="exit">Exit</button>
            </div>

            <div class="tune-body">
                <div class="tabs">
                    <button><svg><use href="#bang" /></svg>Benchmark</button>
                    <button><svg><use href="#i-blue" /></svg>Info</button>
                    <button class="active"><svg><use href="#cross" /></svg>Health</button>
                    <button><svg><use href="#lens" /></svg>Error Scan</button>
                    <button><svg><use href="#folder" /></svg>Folder Usage</button>
                    <button><svg><use href="#bin" /></svg>Erase</button>
                    <button><svg><use href="#file-bang" /></svg>File Benchmark</button>
                    <button><svg><use href="#bars" /></svg>Disk monitor</button>
                    <button><svg><use href="#sound" /></svg>AAM</button>
                    <button><svg><use href="#scatter" /></svg>Random Access</button>
                    <button><svg><use href="#extra" /></svg>Extra tests</button>
                </div>
                <div class="page">
                    <div class="list">
                        <table class="health">
                            <colgroup>
                                <col class="h-id"><col class="h-cur"><col class="h-worst"><col class="h-thr"><col class="h-data"><col class="h-status">
                            </colgroup>
                            <thead>
                                <tr><th>ID</th><th>Current</th><th>Worst</th><th>Threshold</th><th>Data</th><th>Status</th></tr>
                            </thead>
                            <tbody id="healthRows"></tbody>
                        </table>
                    </div>
                    <div class="summary">
                        <dl>
                            <dt>Description:</dt><dd>click on an item for a detailed description</dd>
                            <dt>Status:</dt><dd>n/a</dd>
                        </dl>
                        <svg class="big-warn"><use href="#big-warn" /></svg>
                    </div>
                    <div class="update-row">
                        <span class="k">Health status:</span><b class="good">ok</b>
                        <label for="next">Next update:</label>
                        <progress id="next" value="5" max="100"></progress>
                        <b class="time">4:43</b>
                        <button>Update</button>
                        <button>Log</button>
                    </div>
                </div>
            </div>
        </section>
    </main>

    <footer class="taskbar">
        <button class="weather">
            <svg><use href="#haze" /></svg>
            <span>0°C<small>Haze</small></span>
        </button>
        <div class="apps">
            <button aria-label="Start"><svg><use href="#win" /></svg></button>
            <button class="search"><svg><use href="#search" /></svg>Search</button>
            <button aria-label="Task view"><svg><use href="#taskview" /></svg></button>
            <button aria-label="Microsoft Store"><svg><use href="#store" /></svg></button>
            <button aria-label="File Explorer"><svg><use href="#explorer" /></svg></button>
            <button class="current" aria-label="HD Tune Pro"><svg><use href="#app-tune" /></svg></button>
            <button class="alert" aria-label="Disk search"><svg><use href="#d-search" /></svg></button>
            <button class="running" aria-label="Hard Disk Sentinel"><svg><use href="#app-hds" /></svg></button>
            <button class="running" aria-label="Notepad"><svg><use href="#notepad" /></svg></button>
        </div>
        <div class="tray">
            <svg><use href="#up" /></svg>
            <svg><use href="#shield-lock" /></svg>
            <svg><use href="#v-blue" /></svg>
            <svg><use href="#telegram" /></svg>
            <svg><use href="#idm" /></svg>
            <svg><use href="#anydesk" /></svg>
            <svg><use href="#lens-o" /></svg>
            <span class="deg">36</span>
            <span class="deg">42</span>
            <span class="deg">35</span>
            <span class="deg white">۲۷</span>
            <svg><use href="#tray-ok" /></svg>
            <svg><use href="#cloud" /></svg>
            <svg><use href="#usb" /></svg>
            <svg><use href="#nvidia" /></svg>
            <svg><use href="#defender" /></svg>
            <span class="lang">ENG</span>
            <svg><use href="#wifi" /></svg>
            <svg><use href="#volume" /></svg>
            <span class="clock">7:56 AM<br>1/17/2023</span>
            <span class="badge">1</span>
        </div>
    </footer>

    <script src="script.js"></script>
</body>

</html>
```

FILE: styles.css
```css
* {
    box-sizing: border-box;
}

body {
    margin: 0;
    min-height: 100vh;
    display: flex;
    flex-direction: column;
    background-color: #000;
    color: #000;
    font-family: "Open Sans", "Noto Sans", sans-serif;
    font-size: 11px;
    line-height: 16px;
}

button,
select,
input {
    font: inherit;
    color: inherit;
}

button {
    border: none;
    background: none;
    padding: 0;
}

svg {
    display: block;
    flex: none;
}

.sprite {
    position: absolute;
}

/* desktop */
.desktop {
    flex: 1;
    display: grid;
    grid-template-columns: 8px calc(50% - 8px) 50%;
    overflow: hidden;
}

.wallpaper {
    position: relative;
    overflow: hidden;
    color: #ddd;
}

.wallpaper span {
    position: absolute;
    left: 2px;
}

.wallpaper .d1 {
    top: 73px;
}

.wallpaper .d2 {
    top: 357px;
}

.wallpaper .d3 {
    top: 546px;
}

.wallpaper .d4 {
    top: 857px;
}

.window {
    display: flex;
    flex-direction: column;
    background-color: #f0f0f0;
    border-top: 1px solid #777;
    border-bottom: 1px solid #777;
}

.titlebar {
    display: flex;
    align-items: center;
    height: 30px;
    padding-left: 8px;
    background-color: #fff;
}

/* the sentinel window runs on under the front window */
.inactive {
    margin-right: -6px;
    color: #999;
}

.app-icon {
    width: 16px;
    height: 16px;
    margin-right: 5px;
}

.caption {
    flex: 1;
}

.win-btn {
    width: 46px;
    height: 30px;
    display: flex;
    align-items: center;
    justify-content: center;
}

.win-btn svg {
    width: 12px;
    height: 12px;
}

.menubar {
    display: flex;
    gap: 17px;
    height: 19px;
    padding-left: 6px;
}

.list {
    flex: 1;
    background-color: #fff;
    border: 1px solid #8d9095;
}

table {
    border-collapse: collapse;
    table-layout: fixed;
}

th,
td {
    padding: 0;
    text-align: left;
    font-weight: normal;
    white-space: nowrap;
    overflow: hidden;
    text-overflow: ellipsis;
}

.tabs {
    display: flex;
    align-items: flex-end;
}

.tabs button {
    display: flex;
    align-items: center;
    gap: 7px;
    height: 20px;
    padding: 0 6px 0 5px;
    background-color: #f3f3f3;
    border: 1px solid #e5e5e5;
    border-bottom: none;
    border-left: none;
}

.tabs svg {
    width: 16px;
    height: 16px;
}

.tabs .active {
    height: 22px;
    padding-bottom: 4px;
    background-color: #f9f9f9;
}

.page {
    flex: 1;
    display: flex;
    flex-direction: column;
    background-color: #f9f9f9;
    border: 1px solid #e5e5e5;
}

/* Hard Disk Sentinel */
.toolbar {
    display: flex;
    align-items: center;
    height: 37px;
    background-color: #fff;
    border-top: 2px solid #a0a0a0;
    border-bottom: 1px solid #d5d5d5;
}

.toolbar button {
    width: 24px;
    margin: 0 4px;
}

.toolbar svg {
    width: 24px;
    height: 24px;
}

.toolbar i {
    width: 1px;
    height: 28px;
    margin: 0 4px 0 3px;
    background-color: #999;
}

.hds-body {
    flex: 1;
    display: flex;
    border-top: 1px solid #999;
}

.side {
    width: 357px;
    display: flex;
    flex-direction: column;
    gap: 4px;
}

.panel {
    display: flex;
    flex-direction: column;
    gap: 3px;
    height: 217px;
    padding: 3px 2px;
    background-color: #fff;
    border: 1px solid #a0a0a0;
}

.volumes {
    flex: 1;
    height: auto;
    margin-bottom: 1px;
}

.disk {
    display: grid;
    grid-template-columns: 13px 56px 100px 1fr;
    grid-template-rows: 25px 20px 20px;
    column-gap: 5px;
    align-content: start;
    align-items: center;
    height: 67px;
    padding-left: 2px;
    background: linear-gradient(#e0e0e0, #f0f0f0);
    border-right: 2px solid #c8c8c8;
    border-bottom: 2px solid #d2d2d2;
    white-space: nowrap;
}

.disk.selected {
    background: linear-gradient(#aaeeff, #fff);
}

.disk h3 {
    grid-column: 1 / -1;
    align-self: start;
    margin: 0 0 0 19px;
    font-size: 12px;
    line-height: 21px;
}

.disk h3 span,
.disk h3 em {
    font-weight: normal;
}

em,
.vol {
    color: #8a8a8a;
}

.vol {
    padding-left: 2px;
}

.state {
    width: 16px;
    height: 16px;
    grid-row: 2 / 4;
    margin-bottom: 14px;
}

.lbl {
    text-align: right;
}

.disk .lbl {
    grid-column: 2;
}

.bar {
    height: 16px;
    text-align: center;
    background: linear-gradient(#e2ffe2, #80f780);
    border: solid #fff;
    border-width: 1px 0;
    line-height: 14px;
}

.bar.yellow {
    background: linear-gradient(#ffffe0, #fbf070);
}

.volume {
    display: grid;
    grid-template-columns: 76px 100px 1fr;
    grid-template-rows: 20px 22px;
    column-gap: 5px;
    align-items: center;
    height: 44px;
    background: linear-gradient(#e0e0e0, #f0f0f0);
    border-right: 2px solid #c8c8c8;
    border-bottom: 2px solid #d2d2d2;
}

.volume .name {
    grid-column: 1 / 3;
    display: flex;
    justify-content: space-between;
    padding-left: 2px;
}

.volume .lbl {
    grid-column: 1;
}

.volume em {
    padding-left: 5px;
}

.space {
    height: 15px;
    text-align: center;
    line-height: 13px;
    font-weight: bold;
    color: #fff;
    background: linear-gradient(#0000a8, #0000f0);
    border: 1px solid #000;
}

.space.low {
    background: linear-gradient(90deg, transparent 91%, #d800d8 91%), linear-gradient(#0000a8, #0000f0);
}

.main {
    flex: 1;
    display: flex;
    flex-direction: column;
    margin-left: 4px;
}

.hds .tabs {
    height: 22px;
    padding-left: 1px;
}

.hds .page {
    padding: 11px 10px 13px;
}

.hds .list {
    padding: 1px;
}

.smart {
    width: 809px;
}

.smart tr {
    height: 18px;
}

.smart td {
    padding-left: 1px;
}

.smart th {
    padding-left: 2px;
    border-right: 1px solid #dcdcdc;
}

.smart th.mid {
    text-align: center;
}

.c-no {
    width: 40px;
}

.c-attr {
    width: 251px;
}

.c-num {
    width: 36px;
}

.c-status {
    width: 164px;
}

.c-data {
    width: 130px;
}

.c-offset {
    width: 63px;
}

.c-enable {
    width: 53px;
}

.smart .key td {
    background-color: #f3f3f3;
}

.smart .no {
    display: flex;
    align-items: center;
    gap: 2px;
    height: 18px;
}

.smart .no svg,
.smart .no i {
    width: 16px;
    height: 16px;
}

.smart .data {
    font-weight: bold;
}

.stepper {
    display: flex;
    align-items: center;
    width: 54px;
    height: 16px;
    background-color: #fff;
    border: 1px solid #bdbdbd;
}

.stepper button {
    width: 15px;
    height: 14px;
    display: flex;
    align-items: center;
    justify-content: center;
}

.stepper svg {
    width: 11px;
    height: 11px;
}

.stepper span {
    flex: 1;
    height: 14px;
    line-height: 14px;
    text-align: center;
    font-weight: bold;
    background-color: #f6f6f6;
    border: solid #bdbdbd;
    border-width: 0 1px;
}

.smart .enable {
    padding: 0;
}

.enable input {
    appearance: none;
    display: flex;
    justify-content: center;
    width: 13px;
    height: 13px;
    margin: 0 auto;
    background-color: #fff;
    border: 1px solid #1c5180;
}

.enable input:checked::before {
    content: "";
    width: 3px;
    height: 6px;
    margin-top: 1px;
    border: solid #21a121;
    border-width: 0 2px 2px 0;
    transform: rotate(40deg);
}

.sub-tabs {
    margin-top: 4px;
    display: flex;
}

.sub-tabs button {
    height: 22px;
    padding: 0 7px;
    border: 1px solid #e5e5e5;
    border-bottom: none;
}

.detail {
    display: flex;
    gap: 8px;
    height: 177px;
    padding: 3px;
    border: 1px solid #e5e5e5;
}

.chart {
    width: 648px;
    height: 169px;
    font-size: 11px;
}

.flags {
    flex: 1;
    display: flex;
    flex-direction: column;
    padding: 8px 7px 5px 0;
}

.flags p {
    margin: 0;
    font-weight: bold;
}

.show {
    display: flex;
    align-items: center;
    gap: 3px;
    margin: 25px 0 auto;
}

.show input {
    width: 13px;
    height: 13px;
    margin: 0;
    accent-color: #005fb8;
}

select {
    appearance: none;
    background: #fdfdfd url('data:image/svg+xml,<svg xmlns="http://www.w3.org/2000/svg" width="10" height="6"><path d="M1 1l4 4 4-4" fill="none" stroke="%23666"/></svg>') no-repeat right 4px center;
    border: 1px solid #d0d0d0;
    border-bottom-color: #999;
    border-radius: 2px;
    padding: 0 3px;
}

.flags select {
    height: 23px;
}

.statusbar {
    height: 19px;
    padding: 2px 2px 0;
    border-top: 1px solid #d7d7d7;
}

/* HD Tune Pro */
.tune {
    border-left: 1px solid #777;
    border-right: 1px solid #777;
    box-shadow: 0 0 26px rgba(0, 0, 0, 0.4);
    font-family: "Liberation Sans", Arial, sans-serif;
}

.tune .titlebar,
.tune .menubar {
    font-family: "Open Sans", "Noto Sans", sans-serif;
}

.tune .menubar {
    background-color: #dee6ee;
}

.tune-bar {
    display: flex;
    align-items: flex-start;
    height: 46px;
    padding: 7px 12px 0;
    background: linear-gradient(#f0f0f0, #d0d0d0);
    border-bottom: 1px solid #000;
}

.tune-bar select {
    flex: 1;
    height: 21px;
    margin: 2px 12px 0 0;
}

.tune-bar strong {
    width: 77px;
    padding: 5px 0 0 5px;
    font-size: 12px;
}

.tune-bar .group {
    display: flex;
    gap: 4px;
    margin-right: 9px;
}

.sq,
.exit,
.update-row button {
    height: 26px;
    background-color: #fdfdfd;
    border: 1px solid #d0d0d0;
    border-radius: 4px;
}

.sq {
    width: 26px;
    display: flex;
    align-items: center;
    justify-content: center;
}

.sq svg {
    width: 20px;
    height: 20px;
}

.exit {
    width: 52px;
    margin-left: 14px;
}

.tune-body {
    flex: 1;
    display: flex;
    flex-direction: column;
    padding: 1px 12px 3px 11px;
}

.tune .tabs {
    padding-left: 3px;
}

.tune .tabs button {
    gap: 6px;
    padding: 0 5px;
}

.tune .tabs .active {
    padding-bottom: 4px;
}

.tune .page {
    padding: 1px 4px 27px 3px;
}

.tune .list {
    padding: 1px 0 0 5px;
}

.health {
    width: 511px;
}

.health thead tr {
    height: 25px;
}

.health tr {
    height: 17px;
}

.health th,
.health td {
    padding-left: 7px;
    line-height: 17px;
}

.health th {
    border-right: 1px solid #dcdcdc;
}

.health th:first-child,
.health td:first-child {
    padding-left: 2px;
}

.health td:nth-child(1) {
    background-color: #e0e0e0;
}

.health td:nth-child(3),
.health td:nth-child(5) {
    background-color: #f0f0f0;
}

.health .failed td {
    background-color: #ff3030;
    font-weight: bold;
}

.health .attention td {
    background-color: #30ffff;
}

.h-id {
    width: 185px;
}

.h-cur {
    width: 55px;
}

.h-worst {
    width: 55px;
}

.h-thr {
    width: 70px;
}

.h-data {
    width: 80px;
}

.h-status {
    width: 66px;
}

.summary {
    display: flex;
    justify-content: space-between;
    width: 543px;
    height: 50px;
    border-bottom: 1px solid #999;
}

.summary dl {
    display: grid;
    grid-template-columns: 76px auto;
    align-content: start;
    margin: 4px 0 0 5px;
}

.summary dd {
    margin: 0;
    font-weight: bold;
}

.big-warn {
    width: 30px;
    height: 28px;
    margin-top: 10px;
}

.update-row {
    display: flex;
    align-items: center;
    width: 543px;
    height: 21px;
    margin-top: 7px;
    padding-left: 5px;
}

.update-row .k {
    width: 76px;
}

.good {
    width: 59px;
    color: #00c800;
}

.update-row label {
    width: 70px;
}

.update-row progress {
    appearance: none;
    width: 114px;
    height: 13px;
    border: 1px solid #bcbcbc;
}

.update-row progress::-webkit-progress-bar {
    background-color: #e6e6e6;
}

.update-row progress::-webkit-progress-value {
    background-color: #06b025;
}

.time {
    flex: 1;
    padding-left: 8px;
    font-size: 12px;
}

.update-row button {
    width: 73px;
    height: 21px;
    margin-left: 9px;
}

/* taskbar */
.taskbar {
    display: grid;
    grid-template-columns: minmax(0, 1fr) auto minmax(0, 1fr);
    align-items: center;
    height: 48px;
    background-color: #202020;
    color: #fff;
    font-size: 12px;
}

.weather {
    display: flex;
    align-items: center;
    gap: 7px;
    padding-left: 20px;
    text-align: left;
}

.weather svg {
    width: 24px;
    height: 20px;
}

.weather small {
    display: block;
    font-size: 12px;
    color: #ccc;
}

.apps {
    display: flex;
    align-items: center;
    gap: 4px;
}

.apps button {
    position: relative;
    display: flex;
    align-items: center;
    justify-content: center;
    width: 40px;
    height: 40px;
    border-radius: 4px;
}

.apps svg {
    width: 24px;
    height: 24px;
}

.apps .search {
    gap: 6px;
    width: 101px;
    height: 32px;
    background-color: #2d2d2d;
    border: 1px solid #363636;
    border-radius: 16px;
}

.apps .search svg {
    width: 15px;
    height: 15px;
}

.apps .current {
    background-color: #2e2e2e;
}

.apps .current::after,
.apps .alert::after,
.apps .running::after {
    content: "";
    position: absolute;
    bottom: 0;
    width: 16px;
    height: 3px;
    border-radius: 2px;
    background-color: #4cc2ff;
}

.apps .alert::after {
    width: 24px;
    background-color: #ff99a4;
}

.apps .running::after {
    width: 6px;
    background-color: #9a9a9a;
}

.tray {
    display: flex;
    align-items: center;
    justify-content: flex-end;
    gap: 8px;
    padding-right: 20px;
}

.tray svg {
    width: 16px;
    height: 16px;
}

.deg {
    width: 16px;
    height: 16px;
    text-align: center;
    font: bold 13px/16px "Liberation Sans Narrow", "Liberation Sans", sans-serif;
    color: #000;
    background-color: #80ff80;
}

.deg.white {
    background-color: #fff;
}

.lang {
    margin: 0 10px 0 6px;
}

.clock {
    margin-left: 1px;
    text-align: right;
}

.badge {
    width: 16px;
    height: 16px;
    margin-left: 4px;
    border-radius: 50%;
    text-align: center;
    font-size: 11px;
    color: #000;
    background-color: #4cc2ff;
}
```

FILE: script.js
```js
// no, attribute, threshold, value, worst, data, critical
const smart = [
    [1, 'Raw Read Error Rate', 6, 116, 99, '0000062D9438', true],
    [3, 'Spin Up Time', 0, 96, 96, '000000000000', true],
    [4, 'Start/Stop Count', 20, 91, 91, '00000000271F'],
    [5, 'Reallocated Sectors Count', 10, 100, 100, '000000000000', true],
    [7, 'Seek Error Rate', 30, 70, 60, '000000B3A59C', true],
    [9, 'Power On Time Count', 0, 81, 81, '00000000438E'],
    [10, 'Spin Retry Count', 97, 100, 100, '000000000000', true],
    [12, 'Drive Power Cycle Count', 20, 98, 98, '000000000BE3'],
    [183, 'SATA Downshift Count', 0, 100, 100, '000000000000'],
    [184, 'End-to-End Error Count', 99, 100, 100, '000000000000'],
    [187, 'Reported Uncorrectable Errors', 0, 100, 100, '000000000000'],
    [188, 'Command Timeout', 0, 100, 100, '000100010001'],
    [189, 'High Fly Writes', 0, 98, 98, '000000000002'],
    [190, 'Airflow Temperature', 45, 65, 43, '00DD25170023'],
    [191, 'G-Sense Error Rate', 0, 100, 100, '000000000000'],
    [192, 'Power off Retract Cycle Count', 0, 100, 100, '00000000006E'],
    [193, 'Load/Unload Cycle Count', 0, 53, 53, '000000017337'],
    [194, 'Disk Temperature', 0, 35, 57, '001100000023'],
    [197, 'Current Pending Sector Count', 0, 100, 100, '000000000000', true],
    [198, 'Off-Line Uncorrectable Sector Count', 0, 100, 100, '000000000000', true],
    [199, 'Ultra ATA CRC Error Count', 0, 200, 200, '000000000045'],
    [240, 'Head Flying Hours', 0, 100, 253, '5301000014C7'],
    [241, 'Total LBA Written', 0, 100, 253, '0004284657D0'],
    [242, 'Total LBA Read', 0, 100, 253, '0004FB53EDFE']
];

const minus = '<svg viewBox="0 0 11 11"><path d="M0 5.5h11" stroke="#118a52" stroke-width="3"/></svg>';
const plus = '<svg viewBox="0 0 11 11"><path d="M0 5.5h11M5.5 0v11" stroke="#118a52" stroke-width="3"/></svg>';

document.getElementById('smartRows').innerHTML = smart.map(([no, name, thr, val, worst, data, key]) => `
    <tr class="${key ? 'key' : ''}">
        <td><div class="no">${key ? '<svg><use href="#ok"/></svg>' : '<i></i>'}${no}</div></td>
        <td>${name}</td><td>${thr}</td><td>${val}</td><td>${worst}</td>
        <td>${thr === 0 ? 'OK (Always passing)' : 'OK'}</td>
        <td class="data">${data}</td>
        <td><div class="stepper"><button aria-label="Decrease">${minus}</button><span>0</span><button aria-label="Increase">${plus}</button></div></td>
        <td class="enable"><input type="checkbox" aria-label="Enable ${name}" checked></td>
    </tr>`).join('');

// id, current, worst, threshold, data, status
const health = [
    ['(01) Raw Read Error Rate', 114, 99, 6, '78408192', 'ok'],
    ['(03) Spin Up Time', 96, 96, 0, '0', 'ok'],
    ['(04) Start/Stop Count', 91, 91, 20, '10015', 'ok'],
    ['(05) Reallocated Sector Count', 100, 100, 10, '0', 'ok'],
    ['(07) Seek Error Rate', 70, 60, 30, '11773276', 'ok'],
    ['(09) Power On Hours Count', 81, 81, 0, '17294', 'ok'],
    ['(0A) Spin Retry Count', 100, 100, 97, '0', 'ok'],
    ['(0C) Power Cycle Count', 98, 98, 20, '3043', 'ok'],
    ['(B7) SATA Downshift Count', 100, 100, 0, '0', 'ok'],
    ['(B8) End To End Error Detection', 100, 100, 99, '0', 'ok'],
    ['(BB) Uncorrectable Error Count', 100, 100, 0, '0', 'ok'],
    ['(BC) Command Timeout', 100, 100, 0, '4295032833', 'ok'],
    ['(BD) Unknown Attribute', 98, 98, 0, '2', 'ok'],
    ['(BE) Airflow Temperature', 65, 43, 45, '94981003...', 'failed'],
    ['(BF) G-sense Error Rate', 100, 100, 0, '0', 'ok'],
    ['(C0) Unsafe Shutdown Count', 100, 100, 0, '110', 'ok'],
    ['(C1) Load Cycle Count', 53, 53, 0, '95031', 'ok'],
    ['(C2) Temperature', 35, 57, 0, '73014444067', 'ok'],
    ['(C5) Current Pending Sector', 100, 100, 0, '0', 'ok'],
    ['(C6) Offline Uncorrectable', 100, 100, 0, '0', 'ok'],
    ['(C7) Interface CRC Error Count', 200, 200, 0, '69', 'attention'],
    ['(F0) Head Flying Hours', 100, 253, 0, '981657725...', 'ok'],
    ['(F1) Unknown Attribute', 100, 253, 0, '17855567824', 'ok'],
    ['(F2) Unknown Attribute', 100, 253, 0, '17076368448', 'ok']
];

document.getElementById('healthRows').innerHTML = health.map(row =>
    `<tr class="${row[5]}">${row.map(cell => `<td>${cell}</td>`).join('')}</tr>`
).join('');

// x position, date, raw value
const history = [
    [96, '8/12/2022', 67401312],
    [117, '8/19/2022', 116386928],
    [139, '8/26/2022', 160985824],
    [164, '9/3/2022', 219122600],
    [185, '9/10/2022', 1264776],
    [210, '9/18/2022', 166932648],
    [231, '9/25/2022', 93982384],
    [256, '10/3/2022', 233950440],
    [277, '10/10/2022', 123976480],
    [302, '10/18/2022', 64767080],
    [323, '10/25/2022', 130508488],
    [351, '11/3/2022', 5397736],
    [372, '11/10/2022', 87719280],
    [397, '11/18/2022', 166570384],
    [418, '11/25/2022', 202899304],
    [443, '12/3/2022', 13464344],
    [464, '12/10/2022', 33964832],
    [489, '12/18/2022', 192139536],
    [511, '12/25/2022', 18832104],
    [536, '1/2/2023', 63474456],
    [557, '1/9/2023', 97403640],
    [582, '1/17/2023', 103650360]
];

const yOf = value => Math.round(103 - value / 50000000 * 16.7);
let out = '<rect width="648" height="169" fill="url(#gChart)"/>';

for (let v = 0; v <= 250000000; v += 50000000) {
    const y = yOf(v);
    out += `<path d="M89 ${y}.5h495" stroke="#999" stroke-dasharray="4 3"/>`;
    out += `<text x="89" y="${y + 4}" text-anchor="end">${v.toLocaleString('en-US')}</text>`;
}
history.forEach(([x, date]) => {
    out += `<path d="M${x}.5 17v98" stroke="#999" stroke-dasharray="4 3"/>`;
    out += `<text transform="translate(${x + 4} 115) rotate(-90)" text-anchor="end" font-family="Liberation Sans" font-size="10">${date}</text>`;
});
out += '<rect x="93.5" y="17.5" width="490" height="93" fill="none" stroke="#000" stroke-width="1.5"/>';
out += `<polyline points="${history.map(p => p[0] + ',' + yOf(p[2])).join(' ')}" fill="none" stroke="#0000e8" stroke-width="2"/>`;
history.forEach(([x, , value]) => {
    out += `<circle cx="${x}" cy="${yOf(value)}" r="2" fill="#000"/>`;
});
history.forEach(([x, , value]) => {
    const label = value.toLocaleString('en-US');
    const width = label.length * 6 + 5;
    const top = yOf(value) - 19;
    out += `<rect x="${x - Math.round(width / 2)}.5" y="${top}.5" width="${width}" height="13" fill="#fff" stroke="#000" stroke-dasharray="1 1"/>`;
    out += `<text x="${x}" y="${top + 11}" text-anchor="middle">${label}</text>`;
});
document.getElementById('chart').innerHTML = out;
```
